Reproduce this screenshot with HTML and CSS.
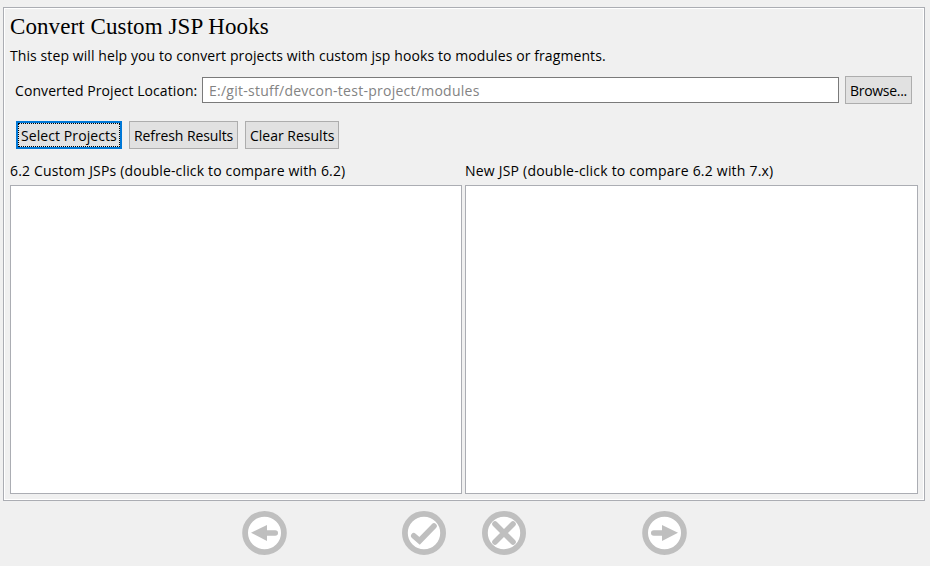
FILE: index.html
```html
<!DOCTYPE html>
<html lang="en">
<head>
<meta charset="utf-8">
<title>Convert Custom JSP Hooks</title>
<link rel="stylesheet" href="styles.css">
</head>
<body>
<main class="panel">
  <h1 class="title">Convert Custom JSP Hooks</h1>
  <p class="intro"><span class="t-intro">This step will help you to convert projects with custom jsp hooks to modules or fragments.</span></p>
  <div class="location">
    <label class="location-label"><span class="t-loc">Converted Project Location:</span></label>
    <div class="field"><span class="t-field">E:/git-stuff/devcon-test-project/modules</span></div>
    <button class="btn browse"><span class="t-browse">Browse...</span></button>
  </div>
  <div class="actions">
    <button class="btn select"><span class="t-select">Select Projects</span></button>
    <button class="btn refresh"><span class="t-refresh">Refresh Results</span></button>
    <button class="btn clear"><span class="t-clear">Clear Results</span></button>
  </div>
  <div class="lists">
    <section class="column">
      <h2 class="caption"><span class="t-old">6.2 Custom JSPs (double-click to compare with 6.2)</span></h2>
      <div class="list"></div>
    </section>
    <section class="column">
      <h2 class="caption"><span class="t-new">New JSP (double-click to compare 6.2 with 7.x)</span></h2>
      <div class="list"></div>
    </section>
  </div>
</main>
<nav class="nav">
  <svg class="icon back" viewBox="0 0 45 44"><ellipse class="ring" cx="22.5" cy="22" rx="19.4" ry="19.1"/><path class="fill" d="M9 21.8 25 14V30z"/><path class="bar" d="M24 22h9.200"/></svg>
  <svg class="icon done" viewBox="0 0 44 44"><circle class="ring" cx="22" cy="22" r="19.1"/><path class="check" d="M11.800 24.800 17.600 29.800 32 15"/></svg>
  <svg class="icon skip" viewBox="0 0 44 44"><circle class="ring" cx="22" cy="22" r="19.1"/><path class="cross" d="M13 13 31 31M31 13 13 31"/></svg>
  <svg class="icon next" viewBox="0 0 45 44"><ellipse class="ring" cx="22.500" cy="22" rx="19.4" ry="19.1"/><path class="fill" d="M36 21.8 20 14V30z"/><path class="bar" d="M21 22h-9.200"/></svg>
</nav>
</body>
</html>
```
FILE: styles.css
```css
* { box-sizing: border-box; }
html { background: #fff; }
body {
  margin: 0;
  width: 930px;
  height: 566px;
  padding: 7px 0 0 3px;
  overflow: hidden;
  background: #f0f0f0;
  color: #000;
  font: 14px/20px "Open Sans", sans-serif;
}
span { white-space: nowrap; }
.panel {
  width: 922px;
  height: 494px;
  padding: 4px 5px 5px;
  border: 1px solid #abadb3;
  box-shadow: inset 0 0 0 1px #fff;
}
.title {
  margin: 0;
  height: 30px;
  padding-left: 1px;
  font: 23px/30px "Liberation Serif", serif;
  letter-spacing: 0.09px;
  white-space: nowrap;
}
.intro { margin: 4px 0 0 1px; height: 20px; }
.location { display: flex; align-items: center; height: 28px; margin-top: 10px; padding-left: 6px; }
.location-label { width: 187px; padding-top: 1px; }
.field {
  width: 637px;
  height: 26px;
  padding: 3px 6px 1px;
  border: 1px solid #7a7a7a;
  background: #fff;
  color: #838383;
}
.btn {
  height: 28px;
  padding: 1px 0 0 4px;
  border: 1px solid #adadad;
  border-radius: 0;
  background: #e1e1e1;
  color: #000;
  font: inherit;
  text-align: left;
}
.browse { width: 67px; margin-left: 6px; }
.actions { display: flex; gap: 7px; margin-top: 17px; padding-left: 7px; }
.select { width: 106px; padding-left: 3px; border: 2px solid #0078d7; outline: 1px dotted #000; outline-offset: -3px; }
.refresh { width: 109px; }
.clear { width: 94px; }
.t-intro { letter-spacing: 0.09px; }
.t-loc { letter-spacing: 0.08px; }
.t-field { letter-spacing: 0.26px; }
.t-browse { letter-spacing: -0.3px; }
.t-select { letter-spacing: 0.08px; }
.t-refresh { letter-spacing: -0.1px; }
.t-old { letter-spacing: 0.16px; }
.t-new { letter-spacing: 0.21px; }
.lists { display: grid; grid-template-columns: 452px 453px; gap: 3px; margin: 12px 0 0 1px; }
.caption { height: 24px; margin: 0; font: inherit; }
.list { height: 309px; border: 1px solid #abadb3; background: #fff; }
.nav { display: flex; margin-top: 10px; padding-left: 239px; }
.icon { width: 44px; height: 44px; }
.back, .next { width: 45px; }
.done { margin-left: 115px; }
.skip { margin-left: 36px; }
.next { margin-left: 116px; }
.ring { fill: #fff; stroke: #bfbfbf; stroke-width: 5.8; }
.fill { fill: #bfbfbf; }
.bar, .check, .cross { fill: none; stroke: #bfbfbf; stroke-width: 5.6; stroke-linecap: round; }
```
